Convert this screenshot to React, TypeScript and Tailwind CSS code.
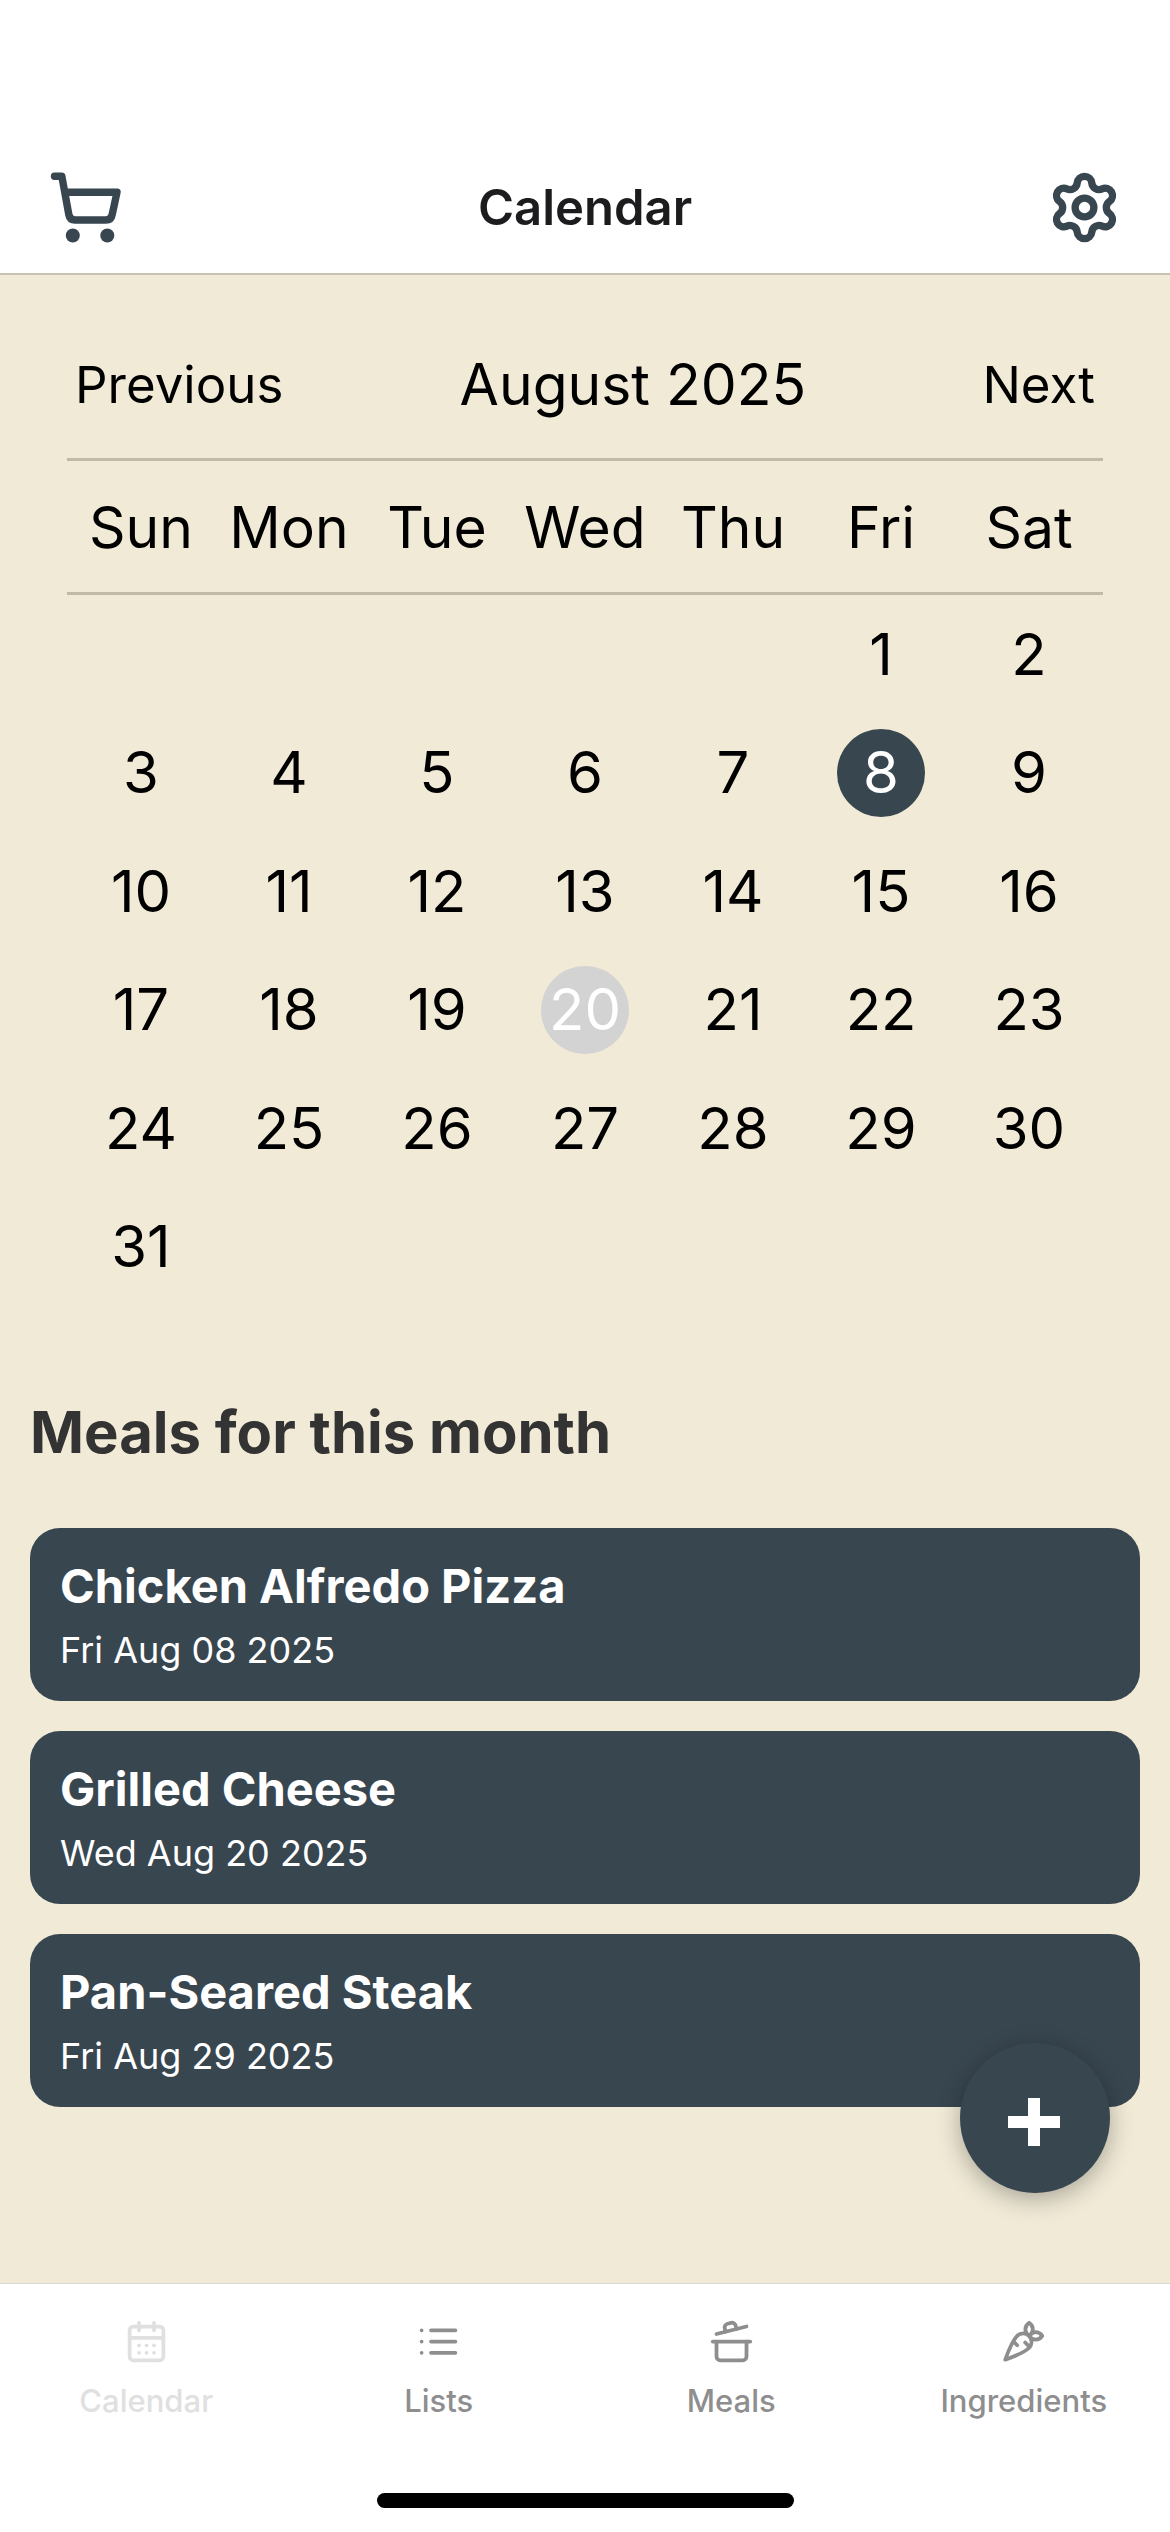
import type { ReactNode } from "react";
import { CalendarDays, Carrot, CookingPot, Settings } from "lucide-react";

const weekdays = ["Sun", "Mon", "Tue", "Wed", "Thu", "Fri", "Sat"];
const leadingBlanks = [0, 1, 2, 3, 4];
const days = Array.from({ length: 31 }, (_, i) => i + 1);
const dayStyles: Record<number, string> = {
  8: "bg-[#384650] text-white",
  20: "bg-[#d3d3d3] text-white",
};

const meals = [
  { name: "Chicken Alfredo Pizza", date: "Fri Aug 08 2025" },
  { name: "Grilled Cheese", date: "Wed Aug 20 2025" },
  { name: "Pan-Seared Steak", date: "Fri Aug 29 2025" },
];

function CartIcon() {
  return (
    <svg viewBox="8 10 75 75" className="size-[75px]" fill="none" stroke="currentColor" strokeWidth="7.4" strokeLinecap="round" strokeLinejoin="round" aria-hidden="true">
      <path d="M14.5 16.2H21.8L28.8 54.5C29.4 58 31.8 60 35 60H66C69.2 60 71.6 58 72.2 54.5L77 32.2H25" />
      <circle cx="32.8" cy="75.5" r="7" fill="currentColor" stroke="none" />
      <circle cx="67.3" cy="75.5" r="7" fill="currentColor" stroke="none" />
    </svg>
  );
}

function ListIcon() {
  return (
    <svg viewBox="0 0 24 24" className="size-[45px]" fill="none" stroke="currentColor" strokeWidth="2" strokeLinecap="round" strokeLinejoin="round" aria-hidden="true">
      <path d="M8 6h13M8 12h13M8 18h13M3 6h.01M3 12h.01M3 18h.01" />
    </svg>
  );
}

function Tab({ label, icon, active }: { label: string; icon: ReactNode; active?: boolean }) {
  return (
    <a
      href="#"
      aria-current={active ? "page" : undefined}
      className={`flex flex-1 flex-col items-center gap-[19px] text-[31px] leading-[36px] font-medium ${active ? "text-[#e0e0e0]" : "text-[#8e8e8f]"}`}
    >
      {icon}
      <span>{label}</span>
    </a>
  );
}

export default function App() {
  return (
    <div className="flex min-h-screen flex-col bg-[#f1ead7] font-[Inter,sans-serif] text-black">
      <header className="flex items-center justify-between border-b-2 border-[#c9c2b3] bg-white px-12 pt-[170px] pb-[28px] text-[#384650]">
        <button type="button" aria-label="Shopping cart">
          <CartIcon />
        </button>
        <h1 className="text-[49px] leading-[60px] font-semibold text-[#1c1c1e]">Calendar</h1>
        <button type="button" aria-label="Settings">
          <Settings className="size-[75px]" strokeWidth={2.35} />
        </button>
      </header>

      <main className="relative flex-1">
        <section className="px-[67px]">
          <div className="flex h-[186px] items-center justify-between border-b-3 border-[#c2baa9] px-2 pt-[36px]">
            <button type="button" className="text-[51px] leading-[72px]">Previous</button>
            <h2 className="text-[57px] leading-[72px]">August 2025</h2>
            <button type="button" className="text-[51px] leading-[72px]">Next</button>
          </div>
          <div className="grid h-[134px] grid-cols-7 items-center border-b-3 border-[#c2baa9] pt-[3px] text-center text-[57px] leading-[72px]">
            {weekdays.map((d) => (
              <span key={d}>{d}</span>
            ))}
          </div>
          <div className="grid h-[711px] grid-cols-7 grid-rows-6 place-items-center text-[58px]">
            {leadingBlanks.map((n) => (
              <span key={`blank-${n}`} />
            ))}
            {days.map((d) => (
              <button key={d} type="button" className={`flex size-[88px] items-center justify-center rounded-full ${dayStyles[d] ?? ""}`}>
                {d}
              </button>
            ))}
          </div>
        </section>

        <section className="px-[30px] pt-[90px]">
          <h2 className="text-[58px] leading-[72px] font-bold text-[#333333]">Meals for this month</h2>
          <ul className="flex flex-col gap-[30px] pt-[60px]">
            {meals.map((m) => (
              <li key={m.name} className="rounded-[30px] bg-[#384650] px-[30px] pt-[28px] pb-[27px] text-white">
                <h3 className="text-[47px] leading-[60px] font-bold">{m.name}</h3>
                <p className="pt-[10px] text-[36px] leading-[48px]">{m.date}</p>
              </li>
            ))}
          </ul>
        </section>

        <button
          type="button"
          aria-label="Add meal"
          className="absolute right-[60px] bottom-[90px] flex size-[150px] items-center justify-center rounded-full bg-[#384650] text-white shadow-[0_6px_24px_rgba(0,0,0,0.3)]"
        >
          <svg viewBox="0 0 52 48" className="mt-2 mr-0.5 h-12 w-[52px]" fill="none" stroke="currentColor" strokeWidth="12" aria-hidden="true">
            <path d="M0 24H52M26 0V48" />
          </svg>
        </button>
      </main>

      <footer className="border-t border-[#d8d8d8] bg-white pt-[35px] pb-6">
        <nav className="flex pb-[74px]" aria-label="Main">
          <Tab label="Calendar" active icon={<CalendarDays className="size-[45px]" />} />
          <Tab label="Lists" icon={<ListIcon />} />
          <Tab label="Meals" icon={<CookingPot className="size-[45px]" />} />
          <Tab label="Ingredients" icon={<Carrot className="size-[45px]" />} />
        </nav>
        <div className="mx-auto h-[15px] w-[417px] rounded-full bg-black" />
      </footer>
    </div>
  );
}
